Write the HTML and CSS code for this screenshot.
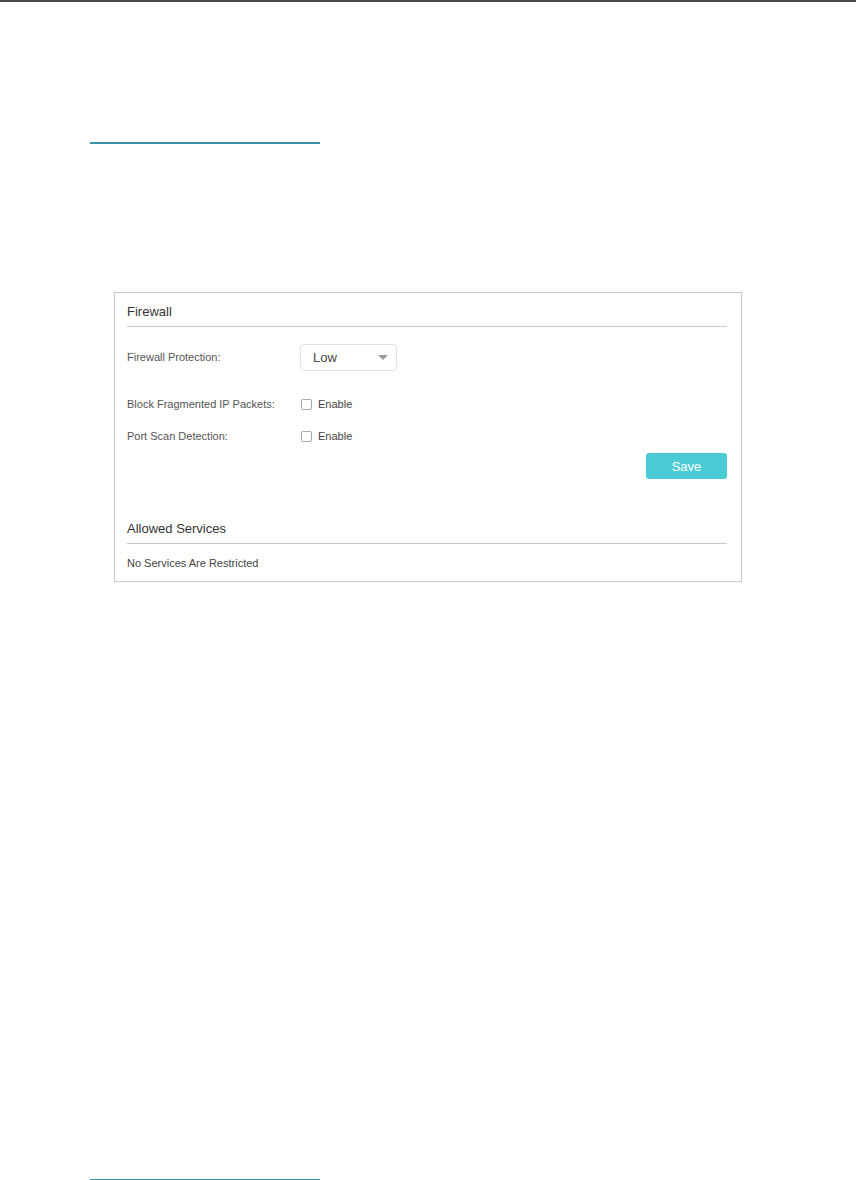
FILE: index.html
```html
<!DOCTYPE html>
<html lang="en">
<head>
    <meta charset="UTF-8">
    <title>Firewall</title>
    <link rel="stylesheet" href="styles.css">
</head>
<body>

    <div class="top-rule"></div>
    <div class="link-rule"></div>

    <div class="panel">
        <h3 class="panel-title">Firewall</h3>

        <div class="row row-select">
            <label class="row-label">Firewall Protection:</label>
            <div class="select-box">
                <span>Low</span>
                <span class="arrow"></span>
            </div>
        </div>

        <div class="row row-check first-check">
            <label class="row-label">Block Fragmented IP Packets:</label>
            <span class="checkbox"></span>
            <span class="check-text">Enable</span>
        </div>

        <div class="row row-check">
            <label class="row-label">Port Scan Detection:</label>
            <span class="checkbox"></span>
            <span class="check-text">Enable</span>
        </div>

        <div class="actions">
            <button class="save-btn">Save</button>
        </div>

        <h3 class="panel-title services-title">Allowed Services</h3>
        <p class="note">No Services Are Restricted</p>
    </div>

    <div class="link-rule bottom-rule"></div>

</body>
</html>
```

FILE: styles.css
```css
body {
    margin: 0;
    background: #ffffff;
    font-family: "Liberation Sans", Arial, sans-serif;
    color: #333;
}

.top-rule {
    height: 2px;
    background: #4a4a4a;
}

.link-rule {
    margin-left: 90px;
    margin-top: 140px;
    width: 230px;
    height: 2px;
    background: #3a94a6;
}

.bottom-rule {
    margin-top: 597px;
}

.panel {
    margin: 148px 0 0 114px;
    width: 600px;
    border: 1px solid #c9c9c9;
    padding: 0 14px 10px 12px;
}

.panel-title {
    margin: 0;
    padding: 10px 0 5px;
    font-size: 13px;
    line-height: 18px;
    font-weight: normal;
    color: #333;
    border-bottom: 1px solid #c9c9c9;
}

.row {
    display: flex;
    align-items: center;
    font-size: 11px;
    color: #555;
}

.row-label {
    width: 173px;
}

.row-select {
    margin-top: 16px;
    height: 28px;
}

.select-box {
    width: 97px;
    height: 27px;
    box-sizing: border-box;
    border: 1px solid #e1e1e1;
    border-radius: 4px;
    display: flex;
    align-items: center;
    justify-content: space-between;
    padding: 0 8px 0 12px;
    font-size: 13px;
    color: #444;
}

.arrow {
    width: 0;
    height: 0;
    border-left: 5px solid transparent;
    border-right: 5px solid transparent;
    border-top: 5px solid #999;
}

.row-check {
    height: 20px;
    margin-top: 12px;
}

.first-check {
    margin-top: 23px;
}

.checkbox {
    width: 11px;
    height: 11px;
    box-sizing: border-box;
    border: 1px solid #aaa;
    border-radius: 2px;
    margin-left: 1px;
}

.check-text {
    margin-left: 6px;
    color: #444;
}

.actions {
    display: flex;
    justify-content: flex-end;
    margin-top: 7px;
}

.save-btn {
    width: 81px;
    height: 26px;
    border: none;
    border-radius: 3px;
    background: #4acbd6;
    color: white;
    font-family: "Liberation Sans", Arial, sans-serif;
    font-size: 13px;
}

.services-title {
    margin-top: 31px;
}

.note {
    margin: 11px 0 0;
    font-size: 11px;
    line-height: 16px;
    color: #444;
}
```
